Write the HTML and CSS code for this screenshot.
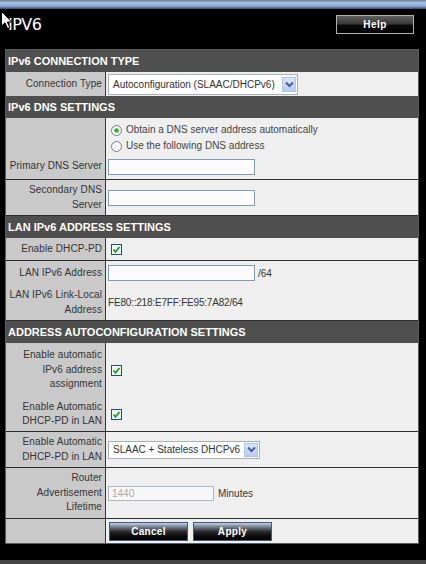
FILE: index.html
```html
<!DOCTYPE html>
<html>
<head>
<meta charset="utf-8">
<title>IPv6</title>
<link rel="stylesheet" href="styles.css">
</head>
<body>
<div class="topbar"></div>
<div class="titlebar">
  <h1 class="title">IPV6</h1>
  <button class="help-btn">Help</button>
</div>

<div class="panel">
  <div class="section">IPv6 CONNECTION TYPE</div>
  <div class="row h24">
    <div class="label">Connection Type</div>
    <div class="value">
      <div class="select sel-conn"><span class="sel-text">Autoconfiguration (SLAAC/DHCPv6)</span><span class="sel-arrow"><svg width="9" height="7" viewBox="0 0 9 7"><path d="M1 1.5 L4.5 5 L8 1.5" fill="none" stroke="#4a5f8a" stroke-width="2"/></svg></span></div>
    </div>
  </div>

  <div class="section">IPv6 DNS SETTINGS</div>
  <div class="row h20">
    <div class="label"></div>
    <div class="value top4">
      <label class="opt"><svg class="radio" width="11" height="11" viewBox="0 0 11 11"><circle cx="5.5" cy="5.5" r="5" fill="#f7f7f7" stroke="#6f7f8f"/><circle cx="5.5" cy="5.5" r="2.3" fill="#2fb52f"/></svg>Obtain a DNS server address automatically</label>
    </div>
  </div>
  <div class="row h16">
    <div class="label"></div>
    <div class="value">
      <label class="opt"><svg class="radio" width="11" height="11" viewBox="0 0 11 11"><circle cx="5.5" cy="5.5" r="5" fill="#f7f7f7" stroke="#6f7f8f"/></svg>Use the following DNS address</label>
    </div>
  </div>
  <div class="row h26 sep">
    <div class="label">Primary DNS Server</div>
    <div class="value"><input class="text-in w147" type="text"></div>
  </div>
  <div class="row h36 sep">
    <div class="label">Secondary DNS<br>Server</div>
    <div class="value"><input class="text-in w147" type="text"></div>
  </div>

  <div class="section">LAN IPv6 ADDRESS SETTINGS</div>
  <div class="row h23 sep">
    <div class="label">Enable DHCP-PD</div>
    <div class="value"><svg class="check" width="11" height="11" viewBox="0 0 11 11"><rect x="0.5" y="0.5" width="10" height="10" fill="#f4f4f4" stroke="#1f4f7f"/><path d="M2.5 5.5 L4.5 7.8 L8.5 3" fill="none" stroke="#22a022" stroke-width="1.8"/></svg></div>
  </div>
  <div class="row h24">
    <div class="label">LAN IPv6 Address</div>
    <div class="value"><input class="text-in w147" type="text"><span class="suffix">/64</span></div>
  </div>
  <div class="row h36 sep">
    <div class="label">LAN IPv6 Link-Local<br>Address</div>
    <div class="value"><span class="plain">FE80::218:E7FF:FE95:7A82/64</span></div>
  </div>

  <div class="section">ADDRESS AUTOCONFIGURATION SETTINGS</div>
  <div class="row h54">
    <div class="label">Enable automatic<br>IPv6 address<br>assignment</div>
    <div class="value"><svg class="check" width="11" height="11" viewBox="0 0 11 11"><rect x="0.5" y="0.5" width="10" height="10" fill="#f4f4f4" stroke="#1f4f7f"/><path d="M2.5 5.5 L4.5 7.8 L8.5 3" fill="none" stroke="#22a022" stroke-width="1.8"/></svg></div>
  </div>
  <div class="row h35 sep">
    <div class="label">Enable Automatic<br>DHCP-PD in LAN</div>
    <div class="value"><svg class="check" width="11" height="11" viewBox="0 0 11 11"><rect x="0.5" y="0.5" width="10" height="10" fill="#f4f4f4" stroke="#1f4f7f"/><path d="M2.5 5.5 L4.5 7.8 L8.5 3" fill="none" stroke="#22a022" stroke-width="1.8"/></svg></div>
  </div>
  <div class="row h36 sep">
    <div class="label">Enable Automatic<br>DHCP-PD in LAN</div>
    <div class="value">
      <div class="select sel-mode"><span class="sel-text">SLAAC + Stateless DHCPv6</span><span class="sel-arrow"><svg width="9" height="7" viewBox="0 0 9 7"><path d="M1 1.5 L4.5 5 L8 1.5" fill="none" stroke="#4a5f8a" stroke-width="2"/></svg></span></div>
    </div>
  </div>
  <div class="row h51 sep">
    <div class="label">Router<br>Advertisement<br>Lifetime</div>
    <div class="value"><input class="text-in w106 disabled" type="text" value="1440" disabled><span class="suffix wide">Minutes</span></div>
  </div>
  <div class="row h24">
    <div class="label"></div>
    <div class="value btns">
      <button class="act-btn">Cancel</button>
      <button class="act-btn">Apply</button>
    </div>
  </div>
</div>

<div class="footer">Copyright © 2012 TRENDnet. All Rights Reserved.</div>

<svg class="cursor" width="12" height="19" viewBox="0 0 12 19"><path d="M0.5 0.5 L0.5 15 L4 11.8 L6.6 17.6 L8.8 16.6 L6.3 11 L10.8 11 Z" fill="#fff" stroke="#000" stroke-width="1"/></svg>
</body>
</html>
```

FILE: styles.css
```css
* { box-sizing: border-box; }

html, body {
  margin: 0;
  padding: 0;
  background: #000;
  overflow: hidden;
}

body {
  width: 426px;
  height: 564px;
  position: relative;
  font-family: "Liberation Sans", Arial, sans-serif;
  font-size: 10px;
  color: #333;
}

.topbar {
  height: 9px;
  background: linear-gradient(#6c7b8f 0%, #a9c1e3 30%, #8eaedb 65%, #34496a 100%);
}

.titlebar {
  height: 40px;
  display: flex;
  justify-content: space-between;
  align-items: flex-start;
  padding: 6px 12px 0 8px;
}

.title {
  margin: 0;
  font-size: 16px;
  line-height: 19px;
  font-weight: normal;
  color: #fff;
  font-family: "DejaVu Sans", "Liberation Sans", sans-serif;
  letter-spacing: -0.5px;
}

.help-btn {
  width: 78px;
  height: 19px;
  padding: 0;
  border: 1px solid #b0b0b0;
  background: linear-gradient(#606060 0%, #3a3a3a 45%, #0a0a0a 55%, #000 100%);
  color: #fff;
  font: bold 10px "Liberation Sans", Arial, sans-serif;
  letter-spacing: 0.5px;
}

.panel {
  margin-left: 5px;
  width: 414px;
  border: 1px solid #5c5c5c;
}

.section {
  height: 22px;
  background: #4f4f4f;
  color: #fff;
  font-weight: bold;
  font-size: 11px;
  line-height: 22px;
  padding-left: 2px;
  white-space: nowrap;
}

.row {
  display: grid;
  grid-template-columns: 100px 1fr;
}

.row.sep { border-bottom: 1px solid #2e2e2e; }

.h16 { height: 16px; }
.h20 { height: 20px; }
.h23 { height: 23px; }
.h24 { height: 24px; }
.h26 { height: 26px; }
.h35 { height: 35px; }
.h36 { height: 36px; }
.h51 { height: 51px; }
.h54 { height: 54px; }

.label {
  background: #c9c9c9;
  border-right: 1px solid #363636;
  display: flex;
  align-items: center;
  justify-content: flex-end;
  text-align: right;
  padding-right: 3px;
  line-height: 14.5px;
  white-space: nowrap;
  color: #333;
  letter-spacing: 0.1px;
}

.value {
  background: #efefef;
  display: flex;
  align-items: center;
  padding-left: 2px;
  white-space: nowrap;
}

.value.top4 {
  align-items: flex-start;
  padding-top: 4px;
}

.opt {
  display: flex;
  align-items: center;
  gap: 4px;
  padding-left: 3px;
  line-height: 16px;
  color: #444;
}

.radio, .check { display: block; flex: none; }
.check { margin-left: 3px; }

.select {
  display: flex;
  align-items: center;
  justify-content: space-between;
  background: #fff;
  border: 1px solid #a9b0b8;
  padding: 0 1px 0 4px;
  color: #333;
}

.sel-conn { width: 190px; height: 21px; }
.sel-mode { width: 152px; height: 18px; }

.sel-arrow {
  width: 14px;
  height: 15px;
  background: linear-gradient(#d8e4fc, #b8cbf4);
  border: 1px solid #b2c3ea;
  display: flex;
  align-items: center;
  justify-content: center;
}
.sel-mode .sel-arrow { height: 14px; }

.text-in {
  height: 16px;
  border: 1px solid #7f9db9;
  background: #fcfcff;
  padding: 0 3px;
  margin: 0;
  font: 10px "Liberation Sans", Arial, sans-serif;
  color: #333;
}
.w147 { width: 147px; }
.w106 { width: 106px; height: 15px; }
.text-in.disabled { background: #f7f7f7; color: #aaa; border-color: #a9b8c6; }

.suffix { margin-left: 3px; color: #333; }
.suffix.wide { margin-left: 4px; }

.plain { color: #333; letter-spacing: -0.2px; }

.btns { gap: 5px; padding-left: 3px; }

.act-btn {
  width: 79px;
  height: 19px;
  padding: 0;
  border: 1px solid #3d5a86;
  background: linear-gradient(#c7d1e1 0%, #7f8a9a 20%, #2b2b2b 50%, #0c0c0c 75%, #000 100%);
  color: #fff;
  font: bold 10px "Liberation Sans", Arial, sans-serif;
  letter-spacing: 0.3px;
}

.footer {
  margin-top: 16px;
  height: 20px;
  background: #454545;
  color: #e0e0e0;
  font-size: 11px;
  font-weight: bold;
  padding: 3px 0 0 218px;
  white-space: nowrap;
  overflow: hidden;
}

.cursor {
  position: absolute;
  left: 1px;
  top: 11px;
}
```
